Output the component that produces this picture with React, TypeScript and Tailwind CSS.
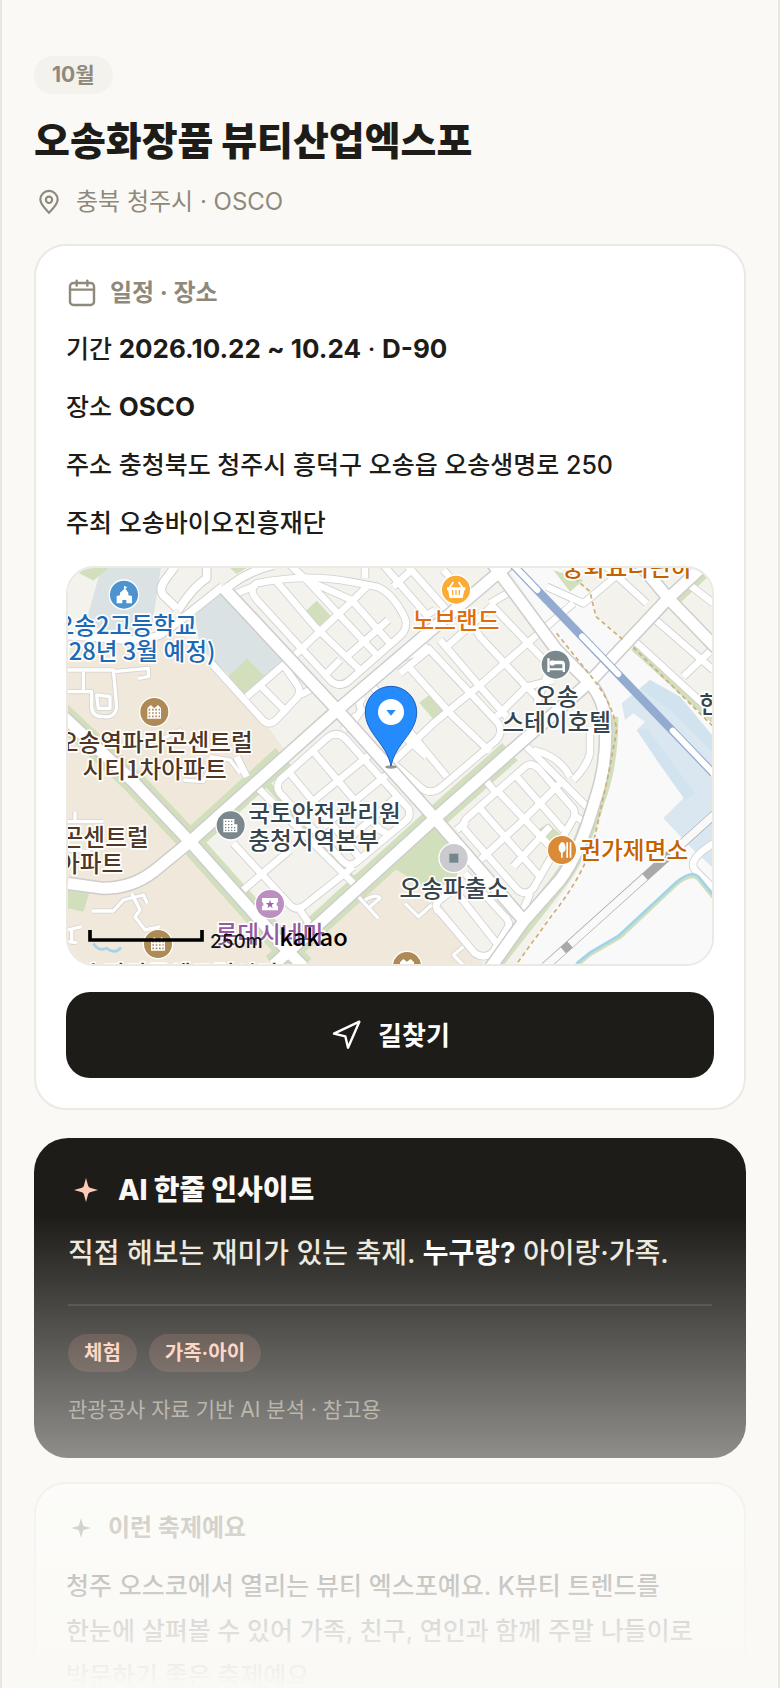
import React from 'react';

interface InfoRow {
  label: string;
  value: React.ReactNode;
}

interface IconProps {
  className?: string;
}

const infoRows: InfoRow[] = [
  { label: '기간', value: <><strong className="text-[26px] font-bold">2026.10.22 ~ 10.24</strong> · <strong className="text-[26px] font-bold">D-90</strong></> },
  { label: '장소', value: <strong className="text-[26px] font-bold">OSCO</strong> },
  { label: '주소', value: '충청북도 청주시 흥덕구 오송읍 오송생명로 250' },
  { label: '주최', value: '오송바이오진흥재단' },
];

const tags = ['체험', '가족·아이'];

const mainRoads = [
  'M487 80 L832 450 L1125 775 L1390 1080',
  'M24 970 L130 985 Q215 985 280 935 L390 845 L832 450 L1325 30 L1360 0',
  'M640 1215 L685 1175 L1125 775 L1590 365 L1825 115 L1960 -10',
  'M0 460 L220 665 L390 845 L685 1175 L730 1220',
  'M1290 0 L1490 270 L1590 370 Q1635 420 1637 500 Q1640 620 1605 720 Q1560 880 1500 960 L1390 1085 L1290 1225',
  'M1725 -5 L1825 115 L1970 265',
];

const sideRoads = [
  'M487 80 L400 150 L355 185 L300 225 Q230 250 150 235 L0 225',
  'M500 85 Q560 35 640 15',
  'M350 145 L320 115 Q290 95 315 60 L345 20',
  'M355 150 Q400 80 440 55 L440 20',
];

const streets = [
  // north-west block
  'M600 130 Q560 90 590 70 Q740 40 870 65 L950 80 Q1000 100 1035 175 Q1045 205 1020 228 L870 360 Q845 385 815 365 Z',
  'M530 100 L590 75', 'M650 65 L765 200 L905 335', 'M740 60 L955 290', 'M690 15 L740 60 L875 120 L990 250',
  'M705 285 L880 120 L920 80', 'M800 340 L840 300', 'M860 290 L985 180', 'M915 20 L915 55',
  // parcels by the school
  'M560 410 L670 315 L715 380 Q725 402 700 425 L645 483 Q625 498 608 480 L450 305', 'M602 378 L672 448', 'M720 405 L760 385',
  // top strip
  'M970 15 L1100 165 L1125 150', 'M1045 20 L1160 150', 'M1150 30 L1210 95', 'M1000 80 L1060 25',
  // centre blocks
  'M930 370 L1160 650', 'M1050 325 L1180 470 L1290 575', 'M1010 300 L1105 265 L1315 490 Q1330 515 1310 540 L1140 685 Q1110 705 1085 685 L1000 610',
  'M985 620 L1120 490 L1260 375 L1390 260 L1540 130', 'M1020 340 L1105 270 L1085 250', 'M1140 240 L1260 380 L1340 470',
  'M1220 165 L1260 230 L1390 370 L1440 420', 'M1160 260 L1300 135', 'M1290 130 L1480 330', 'M1310 470 L1400 380 L1480 360', 'M1360 90 L1290 130',
  'M870 500 L905 450 Q890 430 910 410', 'M1460 80 L1570 130 L1690 30', 'M1460 350 L1430 430',
  // south centre block
  'M660 700 Q645 680 660 660 L800 535 Q830 510 855 535 L1045 745 Q1055 770 1035 785 L885 910 Q865 920 850 905 Z',
  'M690 640 L900 895', 'M760 575 L960 810 L990 825', 'M745 735 L940 575', 'M790 800 L985 640', 'M840 860 L1010 710', 'M850 510 L890 465',
  'M590 680 L880 970', 'M520 850 L690 1035 Q710 1055 735 1035 L880 920', 'M550 990 L625 925 L690 870', 'M720 1050 L760 1110', 'M530 590 L560 650',
  // police station blocks
  'M1215 810 Q1205 790 1220 775 L1395 620 Q1415 605 1435 625 L1540 745 Q1550 765 1535 785 L1420 985 Q1400 1008 1375 992 Z',
  'M1260 745 L1440 950', 'M1310 690 L1490 880', 'M1370 650 L1510 810', 'M1260 900 L1380 790 L1500 670', 'M1360 920 L1470 800', 'M1190 810 L1220 785',
  'M1280 665 L1310 700', 'M1400 560 L1580 740', 'M1540 765 L1580 790', 'M1420 570 Q1500 590 1530 650', 'M1390 1050 L1410 1000',
  'M1135 1055 Q1120 1035 1140 1020 L1165 1000 M1135 1050 L1245 1180 Q1275 1200 1300 1175 L1345 1100 Q1350 1085 1335 1070 L1215 940 M1200 1010 L1310 1150',
  'M1590 500 L1590 580 Q1580 620 1540 660', 'M1100 590 L1010 510',
  // east side
  'M1770 165 L1960 330', 'M1715 235 L1960 460', 'M1870 350 L1960 265', 'M1870 60 L1960 130', 'M1640 20 L1760 130',
  'M1960 850 Q1880 900 1905 930 L1960 985',
];

const lanes = [
  'M24 330 L160 330 L170 440 Q165 475 130 470 Q95 470 95 440 L95 395 L24 395', 'M70 335 L70 395', 'M110 405 L150 410 L150 445 L115 445 Z',
  'M160 335 L265 325 L265 350 L235 355', 'M24 785 L130 785', 'M45 755 L45 785', 'M24 870 L90 875', 'M95 1053 L160 1053 L190 1020 L250 1005 L262 1030',
  'M215 1000 L240 1050 L225 1070 L255 1110 L300 1100', 'M24 1110 L65 1100 M24 1145 L50 1148 M35 1110 L35 1145', 'M300 540 L360 510 L370 550',
  'M450 590 L510 600 L540 640', 'M370 660 L430 665 L450 620', 'M895 1010 L955 1075 M930 1040 L960 1015 Q950 1000 915 1020', 'M1035 1030 L1075 1070 L1115 1035',
  'M1210 1160 L1180 1185 L1210 1215',
];

const VenueMap = () => (
  <svg viewBox="24 24 1932 1188" preserveAspectRatio="xMidYMid slice" className="block w-full h-full" role="img" aria-label="OSCO 지도">
    <rect x="0" y="0" width="1980" height="1240" fill="#f3f2ed" />

    {/* Land use */}
    <path d="M24 250 L200 240 L360 215 L450 310 L610 480 L670 565 L390 845 L690 1180 L990 915 L1110 985 L1270 1212 L24 1212 Z" fill="#f0e9db" />
    <path d="M125 20 L303 20 L285 140 L270 230 L85 200 L85 160 Z M405 165 L487 90 L668 300 L562 395 L420 265 Z" fill="#dae2e4" />
    <path d="M1340 20 L1490 20 L1600 110 L1610 170 L1690 240 L1960 490 L1960 1215 L1370 1215 L1600 860 L1665 600 L1660 480 L1590 370 L1490 240 Z" fill="#f9f9f9" />
    <path d="M1685 430 L1770 360 L1860 410 L1960 530 L1960 925 L1900 870 L1810 775 L1880 705 L1800 610 L1730 510 L1755 485 L1720 460 L1695 480 Z" fill="#dbe7f0" />
    <path d="M1740 385 L1770 360 L1860 410 L1960 530 L1960 580 L1830 450 Z M1730 510 L1760 505 L1905 700 L1875 720 L1790 600 Z" fill="#d0e3ef" />
    <g fill="#d2dfbd">
      <path d="M505 348 L562 296 L612 347 L552 402 Z M735 155 L770 122 L812 167 L775 202 Z M1078 428 L1120 395 L1168 442 L1120 478 Z" />
      <path d="M30 24 L145 24 L100 62 Z M1425 815 L1465 790 L1520 840 L1480 860 Z M510 24 L560 24 L530 42 Z M1480 30 L1570 60 L1530 95 Z" />
      <path d="M985 925 L1120 805 L1200 870 L1190 960 L1110 990 L1010 930 Z M24 990 L88 1000 L70 1055 L24 1045 Z" />
    </g>
    <g fill="none" stroke="#d2dfbd" strokeWidth="70">
      <path d="M0 460 L220 665 L390 845 L685 1175 L730 1220" />
      <path d="M390 845 L670 590" />
      <path d="M640 1215 L1125 775 L1350 575" />
      <path d="M1650 470 Q1650 620 1610 720 Q1560 880 1500 960 L1300 1215" strokeWidth="50" />
    </g>
    <path d="M1720 262 L1960 480 M1850 125 L1940 40 M620 670 L880 960 L990 880" fill="none" stroke="#d2dfbd" strokeWidth="20" />

    {/* Roads */}
    <g fill="none" strokeLinejoin="round">
      <g stroke="#d0d0d0" strokeWidth="25">{streets.map(d => <path key={d} d={d} />)}</g>
      <g stroke="#d4d4d4" strokeWidth="15">{lanes.map(d => <path key={d} d={d} />)}</g>
      <g stroke="#d0d0d0" strokeWidth="29">{sideRoads.map(d => <path key={d} d={d} />)}</g>
      <g stroke="#ffffff" strokeWidth="20">{streets.map(d => <path key={d} d={d} />)}</g>
      <g stroke="#ffffff" strokeWidth="10">{lanes.map(d => <path key={d} d={d} />)}</g>
      <g stroke="#cdcdcd" strokeWidth="42">{mainRoads.map(d => <path key={d} d={d} />)}</g>
      <g stroke="#ffffff" strokeWidth="23">{sideRoads.map(d => <path key={d} d={d} />)}</g>
      <g stroke="#ffffff" strokeWidth="33">{mainRoads.map(d => <path key={d} d={d} />)}</g>
    </g>

    {/* Paths, stream and railways */}
    <g fill="none" stroke="#cdae76" strokeWidth="5" strokeDasharray="13 10">
      <path d="M1510 24 L1590 95 L1608 170 L1690 240 M1720 262 L1960 500" />
      <path d="M1490 220 L1590 345 Q1660 430 1670 510 L1650 620 L1600 850 Q1560 960 1480 1060 L1370 1212" />
    </g>
    <path d="M1550 1215 L1590 1182 L1680 1130 L1850 970 Q1895 935 1915 955 L1960 1010" fill="none" stroke="#d2dfbd" strokeWidth="14" />
    <path d="M1550 1210 L1590 1178 L1675 1128 L1850 966 Q1895 930 1915 950 L1960 1005" fill="none" stroke="#9fd4ec" strokeWidth="8" />
    <path d="M100 1150 Q115 1175 140 1165 Q165 1185 183 1162" fill="none" stroke="#a3d3e6" strokeWidth="8" />
    <path d="M1455 1220 L1965 762" fill="none" stroke="#a9a9a9" strokeWidth="27" />
    <path d="M1455 1220 L1510 1171 M1530 1153 L1755 951 M1830 883 L1965 762" fill="none" stroke="#f9f9f9" strokeWidth="23" />
    <path d="M1350 5 L1960 640" fill="none" stroke="#93abd0" strokeWidth="25" />
    <path d="M1355 10 L1432 90 M1566 229 L1675 342 M1838 512 L1965 645" fill="none" stroke="#ffffff" strokeWidth="18" strokeLinecap="round" />

    {/* Place badges */}
    <g stroke="#ffffff" strokeWidth="4">
      <circle cx="192" cy="104" r="44" fill="#4d93cf" />
      <circle cx="1188" cy="89" r="44" fill="#fcab35" />
      <circle cx="1487" cy="314" r="44" fill="#7a888e" />
      <circle cx="283" cy="456" r="44" fill="#ae8a56" />
      <circle cx="512" cy="796" r="44" fill="#7a888e" />
      <circle cx="1181" cy="894" r="44" fill="#cacacf" />
      <circle cx="1506" cy="870" r="44" fill="#d98b38" />
      <circle cx="630" cy="1032" r="44" fill="#bb90c0" />
      <circle cx="294" cy="1152" r="44" fill="#ae8a56" />
      <circle cx="1041" cy="1218" r="44" fill="#ae8a56" />
    </g>
    <g fill="#ffffff">
      <path d="M170 130 V108 L180 106 V98 L192 88 V77 L202 82 L196 86 L205 98 V106 L216 108 V130 H199 V120 H187 V130 Z" />
      <path d="M1161 82 H1216 V91 H1213 L1208 114 H1169 L1164 91 H1161 Z" />
      <path d="M1462 295 H1469 V325 H1507 V313 H1482 V302 H1507 Q1515 304 1515 314 V336 H1508 V331 H1469 V336 H1462 Z" />
      <circle cx="1477" cy="309" r="8" />
      <path d="M262 476 V445 L272 435 L283 445 L294 435 L303 445 V476 Z" />
      <path d="M490 777 H523 V793 H532 V817 H490 Z" />
      <path d="M1501 850 Q1494 857 1496 868 Q1498 876 1503 878 V893 H1508 V878 Q1516 875 1517 866 Q1516 846 1506 846 Z M1519 847 H1524 V893 H1519 Z M1529 847 H1534 V893 H1529 Z" />
      <path d="M606 1014 H654 V1025 Q645 1032 654 1040 V1051 H606 V1040 Q615 1032 606 1025 Z" />
      <path d="M273 1172 V1141 L283 1131 L294 1141 L305 1131 L315 1141 V1172 Z" />
      <path d="M1020 1215 V1207 L1030 1197 L1041 1205 L1052 1197 L1062 1207 V1215 Z" />
    </g>
    <path d="M1168 84 L1180 66 M1208 84 L1196 66" stroke="#ffffff" strokeWidth="5" />
    <path d="M1178 90 V105 M1188 90 V105 M1198 90 V105" stroke="#fcab35" strokeWidth="4" />
    <path d="M266 449 H300 M266 459 H300 M266 469 H300" stroke="#ae8a56" strokeWidth="5" strokeDasharray="5 5" />
    <path d="M277 1145 H311 M277 1155 H311 M277 1165 H311" stroke="#ae8a56" strokeWidth="5" strokeDasharray="5 5" />
    <path d="M495 784 H520 M495 794 H520 M495 803 H530 M495 811 H530" stroke="#7a888e" strokeWidth="4" strokeDasharray="4 5" />
    <path d="M630 1019 L633 1029 L643 1029 L635 1035 L638 1045 L630 1039 L622 1045 L625 1035 L617 1029 L627 1029 Z" fill="#a263ac" />
    <rect x="1168" y="881" width="27" height="27" fill="#75868c" />

    {/* Place names */}
    <g className="font-['Noto_Sans_CJK_KR',sans-serif] font-medium" fontSize="71" stroke="#ffffff" strokeWidth="10" strokeLinejoin="round" paintOrder="stroke">
      <g fill="#1c6ab5" textAnchor="end">
        <text x="410" y="222">오송2고등학교</text>
        <text x="466" y="301">(2028년 3월 예정)</text>
      </g>
      <g fill="#4f3625" textAnchor="end">
        <text x="578" y="574">오송역파라곤센트럴</text>
        <text x="500" y="653">시티1차아파트</text>
        <text x="266" y="858">파라곤센트럴</text>
        <text x="190" y="937">2차아파트</text>
        <text x="655" y="1268">오송파라곤센트럴시티</text>
      </g>
      <g fill="#36444c">
        <text x="1490" y="435" textAnchor="middle">오송</text>
        <text x="1490" y="514" textAnchor="middle">스테이호텔</text>
        <text x="565" y="787">국토안전관리원</text>
        <text x="565" y="866">충청지역본부</text>
        <text x="1182" y="1012" textAnchor="middle">오송파출소</text>
        <text x="1918" y="458">한국</text>
      </g>
      <text x="1188" y="208" fill="#e06c0c" textAnchor="middle">노브랜드</text>
      <text x="1702" y="48" fill="#c56200" textAnchor="middle">중화요리린하</text>
      <text x="1558" y="897" fill="#c56200">권가제면소</text>
      <text x="630" y="1150" fill="#955ba0" textAnchor="middle">롯데시네마</text>
    </g>

    {/* Scale and provider */}
    <path d="M90 1110 V1140 H426 V1110" fill="none" stroke="#000000" strokeWidth="11" />
    <text x="450" y="1164" fontSize="57" fill="#111111">250m</text>
    <text x="658" y="1158" fontSize="71" className="font-['Noto_Sans_CJK_KR',sans-serif] font-medium" fill="#000000">kakao</text>

    {/* Marker */}
    <ellipse cx="993" cy="621" rx="17" ry="5" fill="#666666" opacity="0.7" />
    <path d="M993 618 C980 550 916 520 916 456 A77 77 0 0 1 1070 456 C1070 520 1006 550 993 618 Z" fill="#258bfc" stroke="#1c5fbe" strokeWidth="3" />
    <circle cx="993" cy="456" r="39" fill="#ffffff" />
    <path d="M979 450 H1007 L993 467 Z" fill="#258bfc" />
  </svg>
);

const PinIcon = ({ className }: IconProps) => (
  <svg viewBox="0 0 24 24" fill="none" stroke="currentColor" strokeWidth="2" strokeLinejoin="round" className={className} aria-hidden="true">
    <path d="M12 22 C9.5 19 4 14.5 4 9.8 A8 8 0 0 1 20 9.8 C20 14.5 14.5 19 12 22 Z" />
    <circle cx="12" cy="10" r="2.9" />
  </svg>
);

const CalendarIcon = ({ className }: IconProps) => (
  <svg viewBox="0 0 24 24" fill="none" stroke="currentColor" strokeWidth="1.8" strokeLinecap="round" className={className} aria-hidden="true">
    <rect x="3" y="4.5" width="18" height="16.5" rx="2.5" />
    <path d="M3 9.5 H21 M8 2.8 V6.5 M16 2.8 V6.5" />
  </svg>
);

const NavigateIcon = ({ className }: IconProps) => (
  <svg viewBox="0 0 24 24" fill="none" stroke="currentColor" strokeWidth="1.8" strokeLinejoin="round" className={className} aria-hidden="true">
    <path d="M3 11 L22 2 L13.5 21.5 L11.5 13 Z" />
  </svg>
);

const SparkIcon = ({ className }: IconProps) => (
  <svg viewBox="0 0 24 24" fill="currentColor" className={className} aria-hidden="true">
    <path d="M12 0 L14.2 8 Q14.7 9.3 16 9.8 L24 12 L16 14.2 Q14.7 14.7 14.2 16 L12 24 L9.8 16 Q9.3 14.7 8 14.2 L0 12 L8 9.8 Q9.3 9.3 9.8 8 Z" />
  </svg>
);

const App = () => {
  return (
    <div className="relative h-screen overflow-hidden border-x-2 border-[#e9e7df] bg-[#faf9f5] font-['Inter','Noto_Sans_CJK_KR',sans-serif] font-medium break-keep text-[#1e1c18]">
      <main className="px-8 pt-14">
        <header>
          <span className="inline-flex h-[38px] items-center rounded-full bg-[#f3f2ed] px-[18px] text-[21px] font-bold text-[#8f897c] align-top">10월</span>
          <h1 className="mt-5 text-[39px] leading-[54px] font-black">오송화장품 뷰티산업엑스포</h1>
          <p className="mt-[18px] flex h-8 items-center gap-3 text-[24px] leading-8 font-normal text-[#8f897c]">
            <span className="flex w-[30px] justify-center"><PinIcon className="size-[26px]" /></span>
            충북 청주시 · OSCO
          </p>
        </header>

        {/* Schedule and venue */}
        <section className="mt-[26px] rounded-[32px] border-2 border-[#ebe9e2] bg-white p-[30px]">
          <h2 className="flex items-center gap-3 text-[24px] leading-[34px] font-bold text-[#8f897c]">
            <CalendarIcon className="size-8" />
            일정 · 장소
          </h2>
          <div className="mt-4 flex flex-col gap-3 text-[25px] leading-[46px]">
            {infoRows.map(row => (
              <p key={row.label}>{row.label} {row.value}</p>
            ))}
          </div>
          <div className="mt-5 h-[400px] overflow-hidden rounded-[28px] border-2 border-[#ebe9e2]">
            <VenueMap />
          </div>
          <button type="button" className="mt-[26px] flex h-[86px] w-full items-center justify-center gap-4 rounded-3xl bg-[#1e1c18] text-[26px] font-bold text-white">
            <NavigateIcon className="size-8" />
            길찾기
          </button>
        </section>

        {/* AI insight */}
        <section className="mt-7 rounded-[34px] bg-[#1e1c18] p-[34px] text-[#ece8dc]">
          <h2 className="flex items-center gap-3.5 text-[28px] leading-9 font-extrabold text-[#faf9f5]">
            <span className="flex w-9 justify-center"><SparkIcon className="size-6 text-[#ffc9b5]" /></span>
            AI 한줄 인사이트
          </h2>
          <p className="mt-5 text-[28px] leading-[50px]">
            직접 해보는 재미가 있는 축제. <strong className="font-bold text-white">누구랑?</strong> 아이랑·가족.
          </p>
          <div className="mt-[26px] border-t-2 border-white/10 pt-7">
            <div className="flex gap-3">
              {tags.map(tag => (
                <span key={tag} className="flex h-[38px] items-center rounded-full bg-[#ff9e85]/15 px-4 text-[20px] font-bold text-[#ffc9b5]">{tag}</span>
              ))}
            </div>
            <p className="mt-6 text-[21px] leading-7 font-normal text-[#8f897c]">관광공사 자료 기반 AI 분석 · 참고용</p>
          </div>
        </section>

        {/* About */}
        <section className="mt-6 rounded-[32px] border-2 border-[#ebe9e2] bg-white p-[30px]">
          <h2 className="flex items-center gap-3 text-[24px] leading-7 font-bold text-[#8f897c]">
            <span className="flex w-[30px] justify-center"><SparkIcon className="size-5" /></span>
            이런 축제예요
          </h2>
          <p className="mt-[22px] text-[25px] leading-[45px]">
            청주 오스코에서 열리는 뷰티 엑스포예요. K뷰티 트렌드를 한눈에 살펴볼 수 있어 가족, 친구, 연인과 함께 주말 나들이로 방문하기 좋은 축제예요.
          </p>
        </section>
      </main>

      {/* Fade over the rest of the page */}
      <div className="pointer-events-none absolute inset-x-0 bottom-0 h-[28%] bg-linear-to-b from-[#faf9f5]/0 to-[#faf9f5]" />
    </div>
  );
};

export default App;
